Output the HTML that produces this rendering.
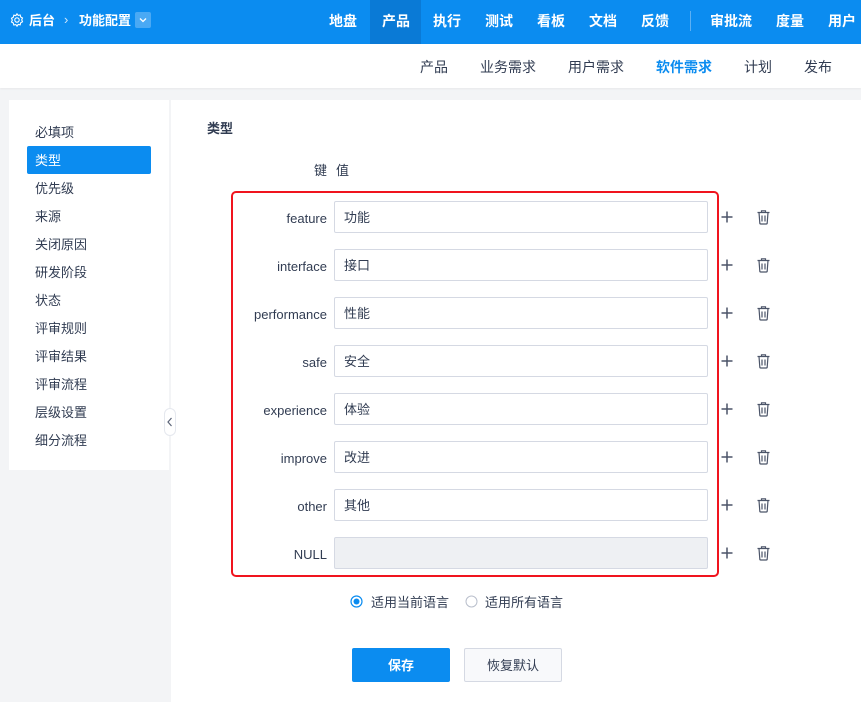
<!DOCTYPE html>
<html><head><meta charset="utf-8"><style>
*{margin:0;padding:0;box-sizing:border-box}
body{width:861px;height:702px;overflow:hidden;background:#f3f4f6;font-family:"Liberation Sans","Noto Sans CJK SC",sans-serif;font-size:13px;color:#313c52;position:relative}
.a{position:absolute;white-space:nowrap}
.top{left:0;top:0;width:861px;height:44px;background:#0b8cf0}
.tn{top:0;height:44px;line-height:42px;color:#fff;font-weight:bold;font-size:14px;transform:translateX(-50%)}
.sub{left:0;top:44px;width:861px;height:44px;background:#fff;box-shadow:0 1px 2px rgba(0,0,0,.05)}
.sn{top:44px;height:44px;line-height:46px;font-size:14px;color:#313c52;transform:translateX(-50%)}
.side{left:9px;top:100px;width:160px;height:370px;background:#fff}
.si{left:35px;font-size:13px;height:28px;line-height:30px;color:#313c52}
.main{left:171px;top:100px;width:690px;height:602px;background:#fff}
.lbl{width:100px;left:227px;text-align:right;height:32px;line-height:35px;color:#313c52}
.inp{left:334px;width:374px;height:32px;border:1px solid #d5d9e3;border-radius:2px;background:#fff;padding-left:9px;line-height:32px;color:#313c52}
.plus{left:720px;width:14px;height:14px}
.trash{left:756px;width:15px;height:16px}
</style></head><body>
<div class="a top"></div>
<svg class="a" style="left:9px;top:12px" width="16" height="16" viewBox="0 0 16 16" fill="none" stroke="#fff" stroke-width="1.1"><circle cx="8" cy="8" r="2.2"/><path d="M8 1.8l1.2 1.6 2-.4.5 2 1.8 1-.8 1.9.8 1.9-1.8 1-.5 2-2-.4L8 14.2l-1.2-1.6-2 .4-.5-2-1.8-1 .8-1.9-.8-1.9 1.8-1 .5-2 2 .4z"/></svg>
<div class="a" style="left:29px;top:0;line-height:41px;color:#fff;font-weight:bold;font-size:13px">后台</div>
<div class="a" style="left:64px;top:0;line-height:40px;color:#cfe6fc;font-size:13px">›</div>
<div class="a" style="left:79px;top:0;line-height:41px;color:#fff;font-weight:bold;font-size:13px">功能配置</div>
<div class="a" style="left:135px;top:12px;width:16px;height:16px;background:#4aa9f4;border-radius:2px"></div>
<svg class="a" style="left:138px;top:16px" width="10" height="8" viewBox="0 0 10 8" fill="none" stroke="#fff" stroke-width="1.3"><path d="M2 2.5l3 3 3-3"/></svg>
<div class="a" style="left:370px;top:0;width:51px;height:44px;background:#0a7ad6"></div>
<div class="a tn" style="left:343px">地盘</div>
<div class="a tn" style="left:396px">产品</div>
<div class="a tn" style="left:447px">执行</div>
<div class="a tn" style="left:499px">测试</div>
<div class="a tn" style="left:551px">看板</div>
<div class="a tn" style="left:603px">文档</div>
<div class="a tn" style="left:655px">反馈</div>
<div class="a" style="left:690px;top:11px;width:1px;height:20px;background:#5cb0f4"></div>
<div class="a tn" style="left:731px">审批流</div>
<div class="a tn" style="left:790px">度量</div>
<div class="a tn" style="left:842px">用户</div>
<div class="a sub"></div>
<div class="a sn" style="left:434px">产品</div>
<div class="a sn" style="left:508px">业务需求</div>
<div class="a sn" style="left:596px">用户需求</div>
<div class="a sn" style="left:684px;color:#0b8cf0;font-weight:bold">软件需求</div>
<div class="a sn" style="left:758px">计划</div>
<div class="a sn" style="left:818px">发布</div>
<div class="a side"></div>
<div class="a" style="left:27px;top:146px;width:124px;height:28px;background:#0b8cf0;border-radius:2px"></div>
<div class="a si" style="top:118px">必填项</div>
<div class="a si" style="top:146px;color:#fff">类型</div>
<div class="a si" style="top:174px">优先级</div>
<div class="a si" style="top:202px">来源</div>
<div class="a si" style="top:230px">关闭原因</div>
<div class="a si" style="top:258px">研发阶段</div>
<div class="a si" style="top:286px">状态</div>
<div class="a si" style="top:314px">评审规则</div>
<div class="a si" style="top:342px">评审结果</div>
<div class="a si" style="top:370px">评审流程</div>
<div class="a si" style="top:398px">层级设置</div>
<div class="a si" style="top:426px">细分流程</div>
<div class="a main"></div>
<div class="a" style="left:164px;top:408px;width:12px;height:28px;background:#fff;border:1px solid #e5e8ee;border-radius:6px"></div>
<svg class="a" style="left:166px;top:416px" width="8" height="12" viewBox="0 0 8 12" fill="none" stroke="#5b6478" stroke-width="1.2"><path d="M5.5 2L2 6l3.5 4"/></svg>
<div class="a" style="left:207px;top:119px;font-weight:bold;font-size:13px;line-height:20px">类型</div>
<div class="a" style="left:314px;top:161px;line-height:20px">键</div>
<div class="a" style="left:336px;top:161px;line-height:20px">值</div>
<div class="a" style="left:231px;top:191px;width:488px;height:386px;border:2px solid #f0141e;border-radius:5px"></div>

<div class="a lbl" style="top:201px">feature</div><div class="a inp" style="top:201px">功能</div>
<div class="a lbl" style="top:249px">interface</div><div class="a inp" style="top:249px">接口</div>
<div class="a lbl" style="top:297px">performance</div><div class="a inp" style="top:297px">性能</div>
<div class="a lbl" style="top:345px">safe</div><div class="a inp" style="top:345px">安全</div>
<div class="a lbl" style="top:393px">experience</div><div class="a inp" style="top:393px">体验</div>
<div class="a lbl" style="top:441px">improve</div><div class="a inp" style="top:441px">改进</div>
<div class="a lbl" style="top:489px">other</div><div class="a inp" style="top:489px">其他</div>
<div class="a lbl" style="top:537px">NULL</div><div class="a inp" style="top:537px;background:#eef0f3"></div>

<svg width="0" height="0" style="position:absolute"><defs>
<symbol id="p" viewBox="0 0 14 14"><path d="M7 1.5v11M1.5 7h11" stroke="#4b5468" stroke-width="1.5"/></symbol>
<symbol id="t" viewBox="0 0 15 16"><path d="M1.5 3.5h12M5.5 3.5V1.8h4v1.7M3 3.5l.8 10.5c0 .6.4 1 1 1h5.4c.6 0 1-.4 1-1L12 3.5M6 6.5v6M9 6.5v6" fill="none" stroke="#4b5468" stroke-width="1.2"/></symbol>
</defs></svg>
<svg class="a plus" style="top:210px"><use href="#p"/></svg><svg class="a trash" style="top:209px"><use href="#t"/></svg>
<svg class="a plus" style="top:258px"><use href="#p"/></svg><svg class="a trash" style="top:257px"><use href="#t"/></svg>
<svg class="a plus" style="top:306px"><use href="#p"/></svg><svg class="a trash" style="top:305px"><use href="#t"/></svg>
<svg class="a plus" style="top:354px"><use href="#p"/></svg><svg class="a trash" style="top:353px"><use href="#t"/></svg>
<svg class="a plus" style="top:402px"><use href="#p"/></svg><svg class="a trash" style="top:401px"><use href="#t"/></svg>
<svg class="a plus" style="top:450px"><use href="#p"/></svg><svg class="a trash" style="top:449px"><use href="#t"/></svg>
<svg class="a plus" style="top:498px"><use href="#p"/></svg><svg class="a trash" style="top:497px"><use href="#t"/></svg>
<svg class="a plus" style="top:546px"><use href="#p"/></svg><svg class="a trash" style="top:545px"><use href="#t"/></svg>

<svg class="a" style="left:350px;top:595px" width="13" height="13"><circle cx="6.5" cy="6.5" r="5.5" fill="#fff" stroke="#0b8cf0" stroke-width="1.2"/><circle cx="6.5" cy="6.5" r="3" fill="#0b8cf0"/></svg>
<div class="a" style="left:371px;top:593px;line-height:20px">适用当前语言</div>
<svg class="a" style="left:465px;top:595px" width="13" height="13"><circle cx="6.5" cy="6.5" r="5.5" fill="#fff" stroke="#b9bfcc" stroke-width="1"/></svg>
<div class="a" style="left:485px;top:593px;line-height:20px">适用所有语言</div>
<div class="a" style="left:352px;top:648px;width:98px;height:34px;background:#0b8cf0;border-radius:2px;color:#fff;font-weight:bold;text-align:center;line-height:35px">保存</div>
<div class="a" style="left:464px;top:648px;width:98px;height:34px;background:#f8f9fb;border:1px solid #d5d9e3;border-radius:2px;text-align:center;line-height:33px">恢复默认</div>
</body></html>
